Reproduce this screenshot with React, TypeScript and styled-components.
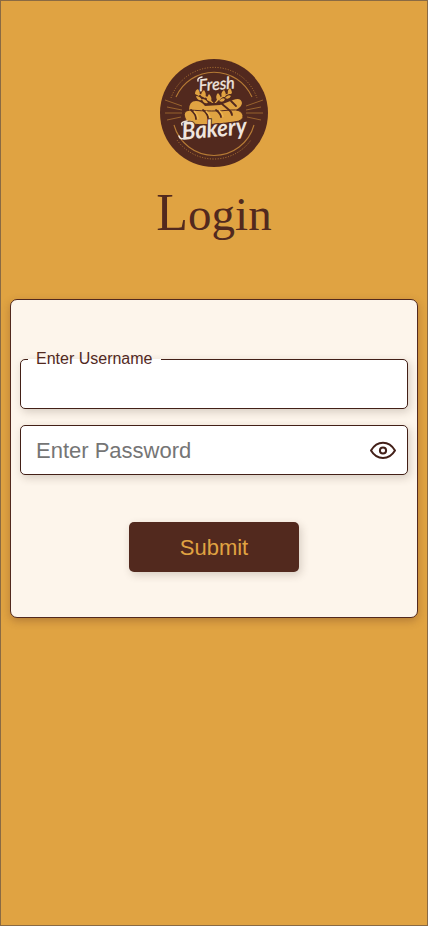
import React, { useState } from 'react';
import styled, { createGlobalStyle } from 'styled-components';

const brown = '#52291e';
const gold = '#e0a342';
const cream = '#fdf5eb';

const GlobalStyle = createGlobalStyle`
  *, *::before, *::after { box-sizing: border-box; }
  body { margin: 0; background: ${gold}; }
  body, input, button { font-family: "Liberation Sans", Arial, sans-serif; }
`;

const Page = styled.main`
  min-height: 926px;
  padding: 58px 9px 0;
  border: 1px solid #8a6a43;
  background: ${gold};
  display: flex;
  flex-direction: column;
  align-items: center;
`;

const LogoArt = styled.svg`
  display: block;
  width: 108px;
  height: 108px;
`;

const Title = styled.h1`
  margin: 16px 0 0;
  height: 60px;
  font: 400 47px/60px "Liberation Serif", "Times New Roman", serif;
  color: ${brown};
  &::first-letter { font-size: 52px; }
`;

const Card = styled.form`
  width: 100%;
  height: 319px;
  margin: 56px 0 0;
  padding: 59px 9px 0;
  border: 1px solid ${brown};
  border-radius: 7px;
  background: ${cream};
  box-shadow: 0 3px 8px rgba(82, 41, 30, 0.3);
  display: flex;
  flex-direction: column;
  align-items: center;
  gap: 16px;
`;

const Field = styled.div`
  position: relative;
  width: 100%;
  height: 50px;
  display: flex;
  align-items: center;
  border: 1px solid #432017;
  border-radius: 5px;
  background: #fff;
  box-shadow: 2px 3px 8px rgba(60, 45, 30, 0.2);
`;

const FloatingLabel = styled.label`
  position: absolute;
  top: -10px;
  left: 7px;
  padding: 0 8px;
  font-size: 16px;
  line-height: 18px;
  white-space: nowrap;
  color: ${brown};
  background: linear-gradient(transparent 9px, #fff 9px);
`;

const Input = styled.input`
  flex: 1;
  min-width: 0;
  height: 100%;
  padding: 2px 15px 0;
  border: 0;
  outline: 0;
  background: transparent;
  font-size: 22px;
  color: ${brown};
  &::placeholder { color: #757575; opacity: 1; }
`;

const EyeButton = styled.button`
  display: flex;
  margin-right: 10px;
  padding: 0;
  border: 0;
  background: none;
  cursor: pointer;
`;

const Submit = styled.button`
  width: 170px;
  height: 50px;
  margin-top: 31px;
  padding: 2px 0 0;
  border: 0;
  border-radius: 5px;
  background: ${brown};
  color: ${gold};
  font-size: 22px;
  box-shadow: 2px 3px 8px rgba(60, 45, 30, 0.2);
  cursor: pointer;
`;

function Logo() {
  return (
    <LogoArt viewBox="0 0 108 108" role="img" aria-label="Fresh Bakery">
      <circle cx="54" cy="54" r="54" fill={brown} />
      <g fill="none" stroke="#b67b35">
        <path d="M11 39A45.5 45.5 0 0 1 97 39M17 81A45.5 45.5 0 0 0 91 81" strokeWidth="1" strokeDasharray="1 1.6" />
        <path d="M16 38A41.5 41.5 0 0 1 92 38M14 66A41.5 41.5 0 0 0 94 66" strokeWidth="1.1" />
        <path d="M5 41l17 6M7 48l15 3M5 54h17M7 61l14-3M103 41l-17 6M101 48l-15 3M103 54H86M101 61l-14-3" strokeWidth=".7" />
      </g>
      <g fill={gold}>
        <path d="M52 44Q46 37 36 35l.5-.7Q48 36 53.5 44zM56 44Q62 37 72 34l-.5-.7Q59 37 54.5 44z" />
        <path d="M35 35q0-4 3-5 3 4 1 7zM41 37q0-4 3-6 3 4 1 8zM47 41q0-4 2-6 4 4 1.500 8zM36 37q4 0 6 4-5 1-6-4zM42 40q4 0 6 4-5 1-6-4zM57 41q-2-4 1-7 4 4 1.500 7zM62 38q-2-4 2-7 3 4 1 7zM68 35q-1-4 2-6 3 4 1 6zM59 42q3-4 6-2-1 4-6 2zM65 39q3-4 6-2-2 4-6 2z" />
        <path d="M29 51Q29 42 36 42q5 0 9 5L60 46l13-5q8-3 9 3-1 8-21 11L29 57z" />
        <path d="M25 59Q22 52 30 51q23 2 41 0 10-1 12 5 1 6-9 7-25 4-44 2-4-2-5-6z" stroke={brown} strokeWidth="1" />
      </g>
      <path d="M31 51q5 4 5 9M43 51q5 4 5 8M56 51q5 4 5 7M68 50q4 3 4 6M62 45l6 5M71 42l5 5" fill="none" stroke={brown} strokeWidth="1.8" strokeLinecap="round" />
      <path d="M34 52q4 4 4 8M46 52q4 4 4 7M59 51q4 4 4 7" fill="none" stroke="#efb750" strokeWidth="1.4" />
      <g fill="#efe5de" fontFamily="Lato, sans-serif" fontStyle="italic">
        <text x="39" y="31" fontSize="16.5" fontWeight="400" stroke="#efe5de" strokeWidth=".35" textLength="36" lengthAdjust="spacingAndGlyphs" transform="rotate(-5 54 28)">Fresh</text>
        <text x="22" y="78" fontSize="24" fontWeight="700" textLength="65" lengthAdjust="spacingAndGlyphs" transform="rotate(-5 54 74)" stroke={brown} strokeWidth="2" paintOrder="stroke">Bakery</text>
      </g>
      <path d="M38 22q-1-3 4-4M22 66q-2-3 5-4M25 79q-5 2-6-2" fill="none" stroke="#efe5de" strokeWidth="1.5" strokeLinecap="round" />
    </LogoArt>
  );
}

function EyeIcon() {
  return (
    <svg width="28" height="20" viewBox="0 0 28 20" fill="none" stroke="#432019" strokeWidth="2" strokeLinejoin="round" aria-hidden="true">
      <path d="M2 10.500C5 5.500 9 2.800 14 2.800S23 5.500 26 10.500c-3 5-7 7.500-12 7.500S5 15.500 2 10.500Z" />
      <circle cx="14" cy="10.500" r="3.100" />
    </svg>
  );
}

export default function App() {
  const [shown, setShown] = useState(false);
  return (
    <>
      <GlobalStyle />
      <Page>
        <Logo />
        <Title>Login</Title>
        <Card onSubmit={(event) => event.preventDefault()}>
          <Field>
            <FloatingLabel htmlFor="username">Enter Username</FloatingLabel>
            <Input id="username" />
          </Field>
          <Field>
            <Input type={shown ? 'text' : 'password'} placeholder="Enter Password" aria-label="Enter Password" />
            <EyeButton type="button" aria-label="Toggle password visibility" onClick={() => setShown(!shown)}>
              <EyeIcon />
            </EyeButton>
          </Field>
          <Submit type="submit">Submit</Submit>
        </Card>
      </Page>
    </>
  );
}
